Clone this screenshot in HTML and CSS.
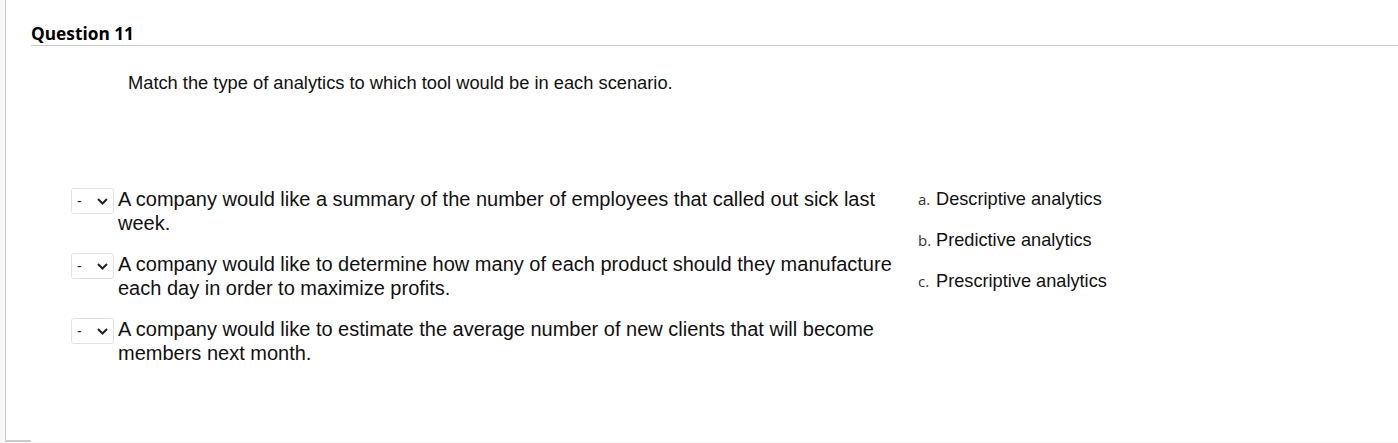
FILE: index.html
```html
<!DOCTYPE html>
<html>
<head>
<meta charset="utf-8">
<link rel="stylesheet" href="styles.css">
</head>
<body>
<div class="frame">
  <div class="panel">
    <h2 class="qtitle">Question 11</h2>
    <p class="prompt">Match the type of analytics to which tool would be in each scenario.</p>
    <div class="match">
      <div class="items">
        <div class="item">
          <div class="sel"><span class="dash">-</span><svg class="chev" width="11" height="7" viewBox="0 0 11 7"><path d="M1 1 L5.5 5.5 L10 1" fill="none" stroke="#222" stroke-width="2"/></svg></div>
          <div class="itext">A company would like a summary of the number of employees that called out sick last week.</div>
        </div>
        <div class="item">
          <div class="sel"><span class="dash">-</span><svg class="chev" width="11" height="7" viewBox="0 0 11 7"><path d="M1 1 L5.5 5.5 L10 1" fill="none" stroke="#222" stroke-width="2"/></svg></div>
          <div class="itext">A company would like to determine how many of each product should they manufacture each day in order to maximize profits.</div>
        </div>
        <div class="item">
          <div class="sel"><span class="dash">-</span><svg class="chev" width="11" height="7" viewBox="0 0 11 7"><path d="M1 1 L5.5 5.5 L10 1" fill="none" stroke="#222" stroke-width="2"/></svg></div>
          <div class="itext">A company would like to estimate the average number of new clients that will become members next month.</div>
        </div>
      </div>
      <div class="answers">
        <div class="ans"><span class="lbl">a.</span><span class="atext">Descriptive analytics</span></div>
        <div class="ans"><span class="lbl">b.</span><span class="atext">Predictive analytics</span></div>
        <div class="ans"><span class="lbl">c.</span><span class="atext">Prescriptive analytics</span></div>
      </div>
    </div>
  </div>
</div>
</body>
</html>
```
FILE: styles.css
```css
html, body {
  margin: 0;
  padding: 0;
  background: #fff;
}
.frame {
  background: #f8f8f8;
  padding-left: 5px;
  height: 443px;
  box-sizing: border-box;
}
.panel {
  background: #fff;
  border-left: 1px solid #ccc;
  height: 442px;
  padding-left: 25px;
  padding-top: 23px;
  box-sizing: border-box;
  position: relative;
}
.panel::after {
  content: "";
  position: absolute;
  left: -1px;
  bottom: 0;
  width: 26px;
  height: 2px;
  background: #ccc;
}
.qtitle {
  margin: 0;
  font-family: "Open Sans", sans-serif;
  font-weight: 700;
  font-size: 17.3px;
  line-height: 22px;
  color: #000;
  border-bottom: 1px solid #ccc;
  padding-bottom: 0;
}
.prompt {
  margin: 26px 0 0 97px;
  font-family: "Liberation Sans", Arial, sans-serif;
  font-size: 18.3px;
  line-height: 21px;
  color: #111;
}
.match {
  display: flex;
  margin-top: 95px;
  margin-left: 40px;
}
.items {
  width: 860px;
  display: flex;
  flex-direction: column;
  gap: 18px;
}
.item {
  display: flex;
  align-items: flex-start;
}
.sel {
  width: 43px;
  height: 26px;
  border: 1px solid #e2e2e2;
  border-radius: 3px;
  box-sizing: border-box;
  display: flex;
  align-items: center;
  padding-left: 5px;
  margin-right: 4px;
  margin-top: 0;
  flex-shrink: 0;
}
.dash {
  font-family: "Liberation Sans", Arial, sans-serif;
  font-size: 14px;
  color: #222;
  width: 20px;
}
.chev {
  display: block;
  margin-top: 1px;
}
.itext {
  font-family: "Liberation Sans", Arial, sans-serif;
  font-size: 20px;
  line-height: 23.5px;
  color: #111;
  width: 800px;
}
.answers {
  margin-left: -13px;
  display: flex;
  flex-direction: column;
  gap: 18px;
  padding-top: 0;
}
.ans {
  display: flex;
  align-items: baseline;
  line-height: 23px;
}
.lbl {
  font-family: "Open Sans", sans-serif;
  font-size: 15px;
  color: #333;
  width: 18px;
}
.atext {
  font-family: "Liberation Sans", Arial, sans-serif;
  font-size: 18.2px;
  color: #111;
}
```
